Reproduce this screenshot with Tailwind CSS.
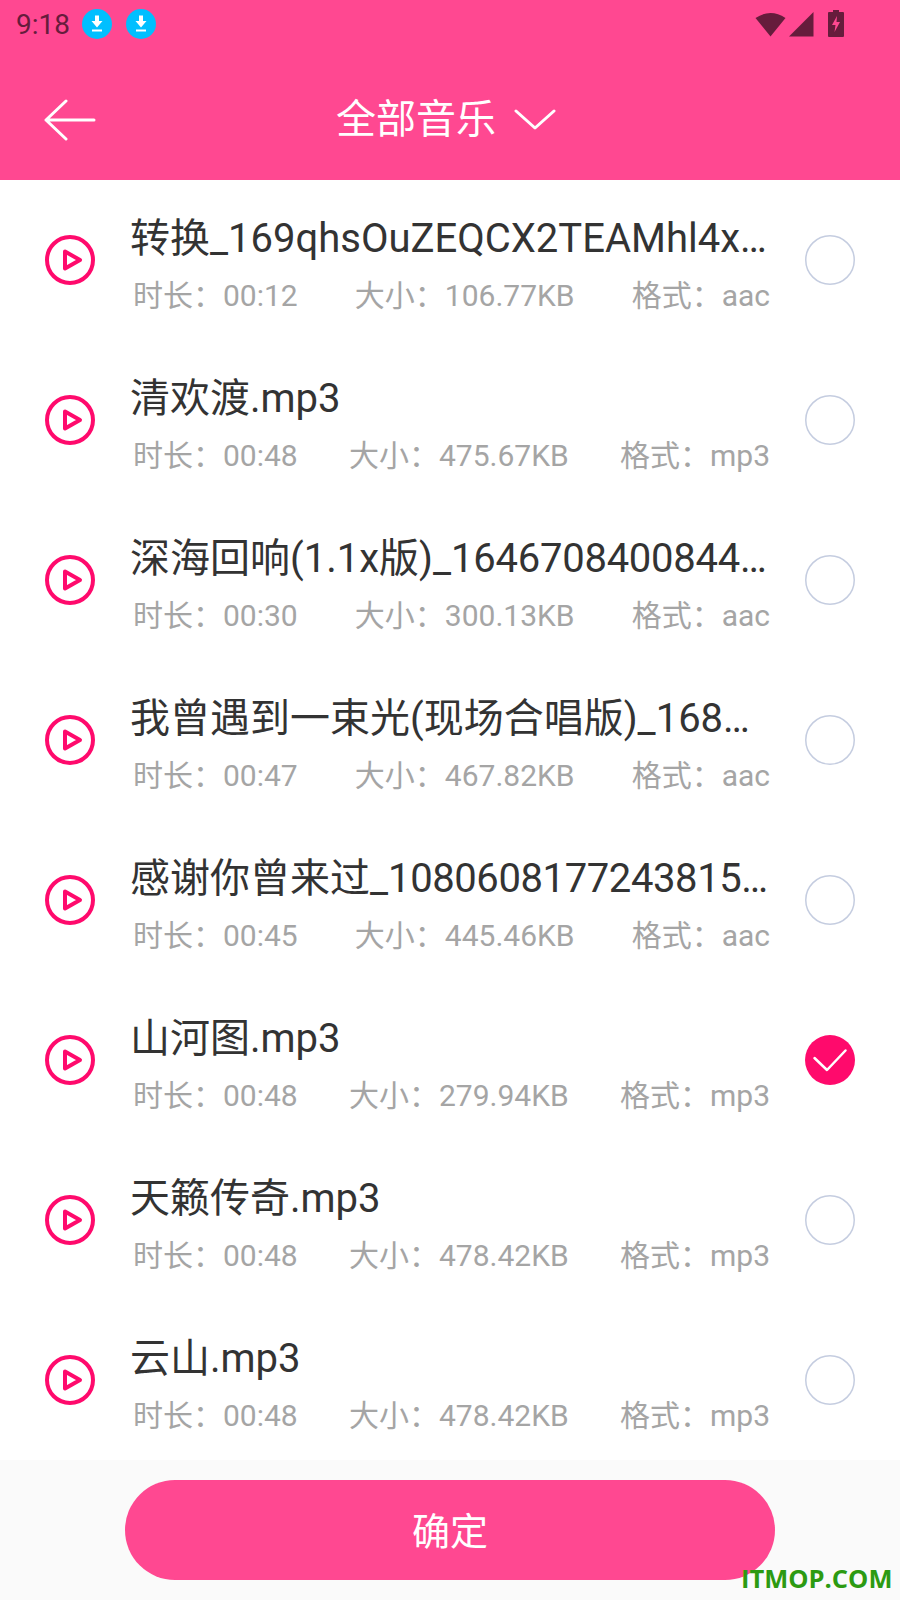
<!DOCTYPE html>
<html><head><meta charset="utf-8">
<script src="https://cdn.jsdelivr.net/npm/@tailwindcss/browser@4"></script>
<title>全部音乐</title></head>
<body class="bg-white">
<div class="w-[900px] h-[1600px] flex flex-col overflow-hidden relative font-['Roboto','Noto_Sans_CJK_SC',sans-serif]">
  <header class="h-[180px] bg-[#ff4891] shrink-0 flex flex-col">
    <div class="h-[50px] flex items-center pl-[16px] pr-[56px]">
      <span class="text-[28px] text-[#661c3c] mr-[12px]">9:18</span>
      <svg class="w-[30px] h-[30px] mr-[14px] mb-[3px]" viewBox="0 0 30 30"><circle cx="15" cy="15" r="15" fill="#00bfff"/><path d="M13 6.500h4V12h3.500L15 18.500 9.500 12H13ZM10 20.500h10v2H10Z" fill="#fff"/></svg>
      <svg class="w-[30px] h-[30px] mb-[3px]" viewBox="0 0 30 30"><circle cx="15" cy="15" r="15" fill="#00bfff"/><path d="M13 6.500h4V12h3.500L15 18.500 9.500 12H13ZM10 20.500h10v2H10Z" fill="#fff"/></svg>
      <div class="ml-auto flex items-center mb-[3px]">
        <svg class="w-[31px] h-[26px] mr-[3px]" viewBox="0 0 31 26"><path d="M0.500 7Q15.500 -3 30.500 7L15.500 25.500Z" fill="#661c3c"/></svg>
        <svg class="w-[25px] h-[26px] mr-[14px]" viewBox="0 0 25 26"><path d="M0 25.500L24.500 1V25.500Z" fill="#661c3c"/></svg>
        <svg class="w-[16px] h-[27px]" viewBox="0 0 16 27"><path d="M5 0h6v2h4a1 1 0 0 1 1 1v23a1 1 0 0 1-1 1H1a1 1 0 0 1-1-1V3a1 1 0 0 1 1-1h4Z" fill="#661c3c"/><path d="M9 6L4 15h3.500L6.500 22 12 12H8.500Z" fill="#ff4891"/></svg>
      </div>
    </div>
    <div class="flex-1 flex items-center pl-[44px] pt-[9px]">
      <svg class="w-[52px] h-[42px]" viewBox="0 0 52 42"><path d="M22 2L2 21L22 40M2 21H50" fill="none" stroke="#fff" stroke-width="3" stroke-linecap="round" stroke-linejoin="round"/></svg>
      <span class="text-[40px] leading-[48px] text-white ml-[240px]">全部音乐</span>
      <svg class="w-[42px] h-[24px] ml-[18px]" viewBox="0 0 42 24"><path d="M2 3L21 20L40 3" fill="none" stroke="#fff" stroke-width="3" stroke-linecap="round" stroke-linejoin="round"/></svg>
    </div>
  </header>

  <main class="flex-1 min-h-0">
    <div class="h-[160px] flex items-center pl-[45px] pr-[45px]">
      <svg class="w-[50px] h-[50px] shrink-0" viewBox="0 0 50 50"><circle cx="25" cy="25" r="23" fill="none" stroke="#ff0a6c" stroke-width="4"/><path d="M20 16.500L35 25L20 33.500Z" fill="none" stroke="#ff0a6c" stroke-width="4" stroke-linejoin="round"/></svg>
      <div class="w-[641px] ml-[35px] flex flex-col pt-[8px]">
        <div class="text-[40px] leading-[52px] text-[#333] whitespace-nowrap">转换_169qhsOuZEQCX2TEAMhl4x…</div>
        <div class="flex justify-between text-[30px] leading-[40px] text-[#a5a5a5] pl-[3px] pr-[1px] mt-[11px]"><span>时长：00:12</span><span>大小：106.77KB</span><span>格式：aac</span></div>
      </div>
      <svg class="w-[50px] h-[50px] ml-auto shrink-0" viewBox="0 0 50 50"><circle cx="25" cy="25" r="24.250" fill="none" stroke="#c5cde0" stroke-width="1.500"/></svg>
    </div>
    <div class="h-[160px] flex items-center pl-[45px] pr-[45px]">
      <svg class="w-[50px] h-[50px] shrink-0" viewBox="0 0 50 50"><circle cx="25" cy="25" r="23" fill="none" stroke="#ff0a6c" stroke-width="4"/><path d="M20 16.500L35 25L20 33.500Z" fill="none" stroke="#ff0a6c" stroke-width="4" stroke-linejoin="round"/></svg>
      <div class="w-[641px] ml-[35px] flex flex-col pt-[8px]">
        <div class="text-[40px] leading-[52px] text-[#333] whitespace-nowrap">清欢渡.mp3</div>
        <div class="flex justify-between text-[30px] leading-[40px] text-[#a5a5a5] pl-[3px] pr-[1px] mt-[11px]"><span>时长：00:48</span><span>大小：475.67KB</span><span>格式：mp3</span></div>
      </div>
      <svg class="w-[50px] h-[50px] ml-auto shrink-0" viewBox="0 0 50 50"><circle cx="25" cy="25" r="24.250" fill="none" stroke="#c5cde0" stroke-width="1.500"/></svg>
    </div>
    <div class="h-[160px] flex items-center pl-[45px] pr-[45px]">
      <svg class="w-[50px] h-[50px] shrink-0" viewBox="0 0 50 50"><circle cx="25" cy="25" r="23" fill="none" stroke="#ff0a6c" stroke-width="4"/><path d="M20 16.500L35 25L20 33.500Z" fill="none" stroke="#ff0a6c" stroke-width="4" stroke-linejoin="round"/></svg>
      <div class="w-[641px] ml-[35px] flex flex-col pt-[8px]">
        <div class="text-[40px] leading-[52px] text-[#333] whitespace-nowrap">深海回响(1.1x版)_<span class="tracking-[-0.25px]">1646708400844</span>…</div>
        <div class="flex justify-between text-[30px] leading-[40px] text-[#a5a5a5] pl-[3px] pr-[1px] mt-[11px]"><span>时长：00:30</span><span>大小：300.13KB</span><span>格式：aac</span></div>
      </div>
      <svg class="w-[50px] h-[50px] ml-auto shrink-0" viewBox="0 0 50 50"><circle cx="25" cy="25" r="24.250" fill="none" stroke="#c5cde0" stroke-width="1.500"/></svg>
    </div>
    <div class="h-[160px] flex items-center pl-[45px] pr-[45px]">
      <svg class="w-[50px] h-[50px] shrink-0" viewBox="0 0 50 50"><circle cx="25" cy="25" r="23" fill="none" stroke="#ff0a6c" stroke-width="4"/><path d="M20 16.500L35 25L20 33.500Z" fill="none" stroke="#ff0a6c" stroke-width="4" stroke-linejoin="round"/></svg>
      <div class="w-[641px] ml-[35px] flex flex-col pt-[8px]">
        <div class="text-[40px] leading-[52px] text-[#333] whitespace-nowrap">我曾遇到一束光(现场合唱版)_168…</div>
        <div class="flex justify-between text-[30px] leading-[40px] text-[#a5a5a5] pl-[3px] pr-[1px] mt-[11px]"><span>时长：00:47</span><span>大小：467.82KB</span><span>格式：aac</span></div>
      </div>
      <svg class="w-[50px] h-[50px] ml-auto shrink-0" viewBox="0 0 50 50"><circle cx="25" cy="25" r="24.250" fill="none" stroke="#c5cde0" stroke-width="1.500"/></svg>
    </div>
    <div class="h-[160px] flex items-center pl-[45px] pr-[45px]">
      <svg class="w-[50px] h-[50px] shrink-0" viewBox="0 0 50 50"><circle cx="25" cy="25" r="23" fill="none" stroke="#ff0a6c" stroke-width="4"/><path d="M20 16.500L35 25L20 33.500Z" fill="none" stroke="#ff0a6c" stroke-width="4" stroke-linejoin="round"/></svg>
      <div class="w-[641px] ml-[35px] flex flex-col pt-[8px]">
        <div class="text-[40px] leading-[52px] text-[#333] whitespace-nowrap">感谢你曾来过_<span class="tracking-[-0.4px]">1080608177243815</span>…</div>
        <div class="flex justify-between text-[30px] leading-[40px] text-[#a5a5a5] pl-[3px] pr-[1px] mt-[11px]"><span>时长：00:45</span><span>大小：445.46KB</span><span>格式：aac</span></div>
      </div>
      <svg class="w-[50px] h-[50px] ml-auto shrink-0" viewBox="0 0 50 50"><circle cx="25" cy="25" r="24.250" fill="none" stroke="#c5cde0" stroke-width="1.500"/></svg>
    </div>
    <div class="h-[160px] flex items-center pl-[45px] pr-[45px]">
      <svg class="w-[50px] h-[50px] shrink-0" viewBox="0 0 50 50"><circle cx="25" cy="25" r="23" fill="none" stroke="#ff0a6c" stroke-width="4"/><path d="M20 16.500L35 25L20 33.500Z" fill="none" stroke="#ff0a6c" stroke-width="4" stroke-linejoin="round"/></svg>
      <div class="w-[641px] ml-[35px] flex flex-col pt-[8px]">
        <div class="text-[40px] leading-[52px] text-[#333] whitespace-nowrap">山河图.mp3</div>
        <div class="flex justify-between text-[30px] leading-[40px] text-[#a5a5a5] pl-[3px] pr-[1px] mt-[11px]"><span>时长：00:48</span><span>大小：279.94KB</span><span>格式：mp3</span></div>
      </div>
      <svg class="w-[50px] h-[50px] ml-auto shrink-0" viewBox="0 0 50 50"><circle cx="25" cy="25" r="25" fill="#ff0a6c"/><path d="M9.500 23L22 35L40.500 15.500" fill="none" stroke="#fff" stroke-width="2.500" stroke-linecap="round" stroke-linejoin="round"/></svg>
    </div>
    <div class="h-[160px] flex items-center pl-[45px] pr-[45px]">
      <svg class="w-[50px] h-[50px] shrink-0" viewBox="0 0 50 50"><circle cx="25" cy="25" r="23" fill="none" stroke="#ff0a6c" stroke-width="4"/><path d="M20 16.500L35 25L20 33.500Z" fill="none" stroke="#ff0a6c" stroke-width="4" stroke-linejoin="round"/></svg>
      <div class="w-[641px] ml-[35px] flex flex-col pt-[8px]">
        <div class="text-[40px] leading-[52px] text-[#333] whitespace-nowrap">天籁传奇.mp3</div>
        <div class="flex justify-between text-[30px] leading-[40px] text-[#a5a5a5] pl-[3px] pr-[1px] mt-[11px]"><span>时长：00:48</span><span>大小：478.42KB</span><span>格式：mp3</span></div>
      </div>
      <svg class="w-[50px] h-[50px] ml-auto shrink-0" viewBox="0 0 50 50"><circle cx="25" cy="25" r="24.250" fill="none" stroke="#c5cde0" stroke-width="1.500"/></svg>
    </div>
    <div class="h-[160px] flex items-center pl-[45px] pr-[45px]">
      <svg class="w-[50px] h-[50px] shrink-0" viewBox="0 0 50 50"><circle cx="25" cy="25" r="23" fill="none" stroke="#ff0a6c" stroke-width="4"/><path d="M20 16.500L35 25L20 33.500Z" fill="none" stroke="#ff0a6c" stroke-width="4" stroke-linejoin="round"/></svg>
      <div class="w-[641px] ml-[35px] flex flex-col pt-[8px]">
        <div class="text-[40px] leading-[52px] text-[#333] whitespace-nowrap">云山.mp3</div>
        <div class="flex justify-between text-[30px] leading-[40px] text-[#a5a5a5] pl-[3px] pr-[1px] mt-[11px]"><span>时长：00:48</span><span>大小：478.42KB</span><span>格式：mp3</span></div>
      </div>
      <svg class="w-[50px] h-[50px] ml-auto shrink-0" viewBox="0 0 50 50"><circle cx="25" cy="25" r="24.250" fill="none" stroke="#c5cde0" stroke-width="1.500"/></svg>
    </div>
  </main>

  <footer class="h-[140px] shrink-0 bg-[#fafafa] flex justify-center pt-[20px]">
    <button class="w-[650px] h-[100px] rounded-full bg-[#ff4891] text-white text-[38px] pt-[4px]">确定</button>
  </footer>
  <div class="absolute left-[741px] top-[1562px] text-[25.5px] leading-[32px] font-bold text-[#2c9a12] font-['Open_Sans',sans-serif]">ITMOP.COM</div>
</div>
</body></html>
